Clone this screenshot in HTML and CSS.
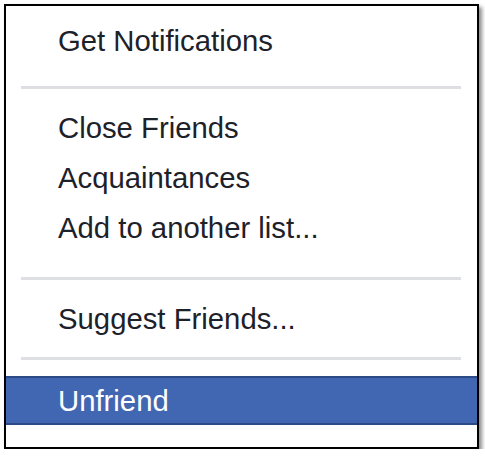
FILE: index.html
```html
<!DOCTYPE html>
<html>
<head>
<meta charset="utf-8">
<link rel="stylesheet" href="styles.css">
</head>
<body>
<div class="menu">
  <ul class="group first">
    <li class="item">Get Notifications</li>
  </ul>
  <div class="sep sep1"></div>
  <ul class="group">
    <li class="item">Close Friends</li>
    <li class="item">Acquaintances</li>
    <li class="item">Add to another list...</li>
  </ul>
  <div class="sep sep2"></div>
  <ul class="group">
    <li class="item">Suggest Friends...</li>
  </ul>
  <div class="sep sep3"></div>
  <ul class="group">
    <li class="item active">Unfriend</li>
  </ul>
</div>
</body>
</html>
```
FILE: styles.css
```css
html, body {
  margin: 0;
  padding: 0;
  background: #ffffff;
}
body {
  padding: 4px 0 0 4px;
  font-family: "Liberation Sans", Arial, sans-serif;
}
.menu {
  box-sizing: border-box;
  width: 475px;
  height: 445px;
  border: 2px solid #000;
  background: #fff;
  box-shadow: 3px 3px 4px rgba(0, 0, 0, 0.45);
  padding-top: 10px;
}
.group {
  list-style: none;
  margin: 0;
  padding: 0;
}
.item {
  height: 50px;
  line-height: 50px;
  font-size: 29.3px;
  color: #1d2129;
  padding-left: 52px;
  white-space: nowrap;
}
.item.active {
  background: #4267b2;
  color: #fff;
  box-shadow: inset 0 2px 0 #2c4a86, inset 0 -2px 0 #2c4a86;
  height: 49px;
}
.sep {
  height: 3px;
  background: #dddfe2;
  margin-left: 15px;
  margin-right: 16px;
}
.sep1 { margin-top: 20px; margin-bottom: 14px; }
.sep2 { margin-top: 24px; margin-bottom: 14px; }
.sep3 { margin-top: 13px; margin-bottom: 16px; }
```
